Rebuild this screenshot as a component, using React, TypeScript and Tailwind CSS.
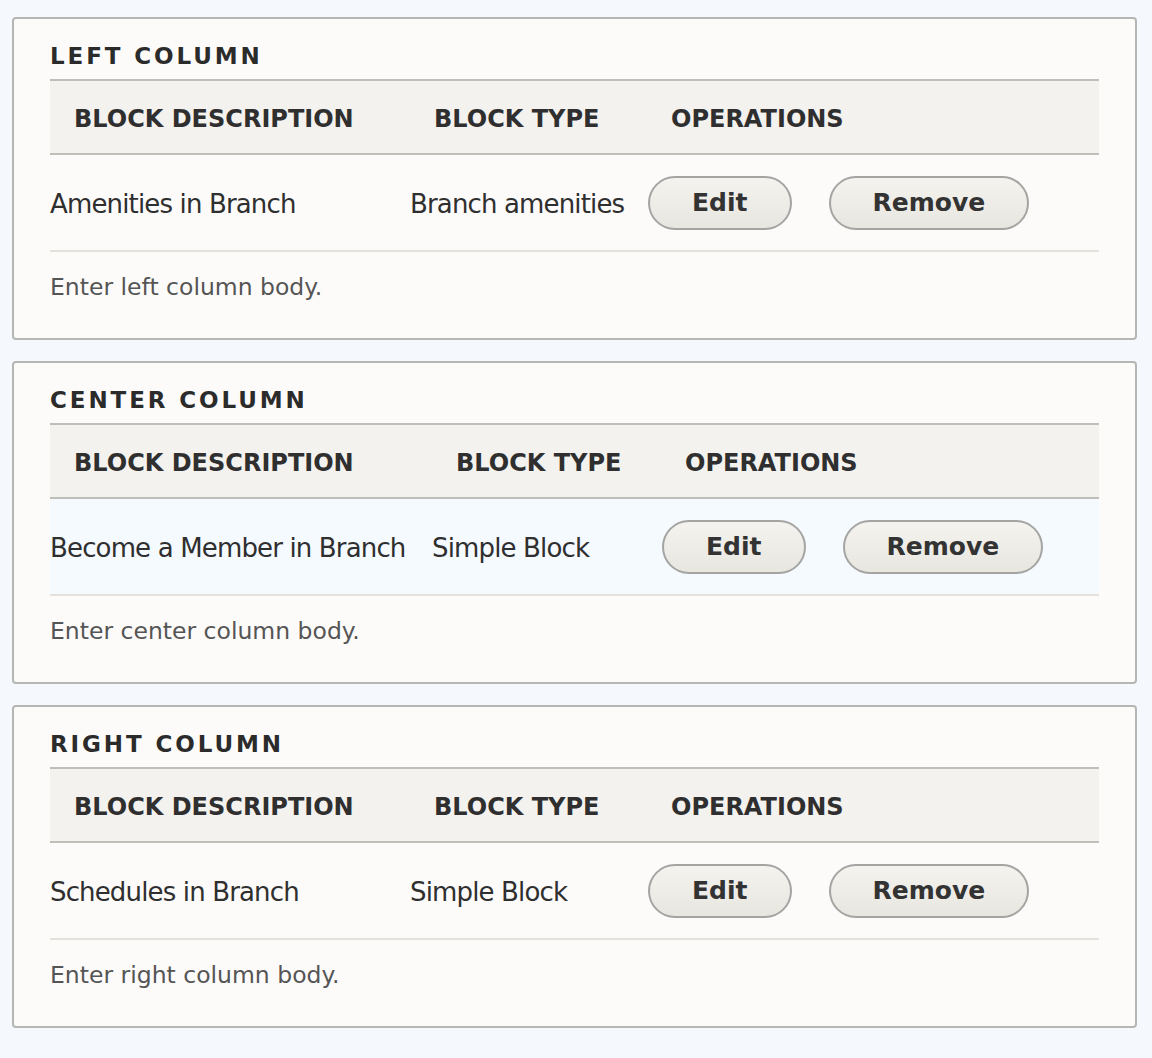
import React from "react";

type Region = {
  title: string;
  description: string;
  type: string;
  body: string;
  cols: string;
  highlight?: boolean;
};

const regions: Region[] = [
  {
    title: "Left column",
    description: "Amenities in Branch",
    type: "Branch amenities",
    body: "Enter left column body.",
    cols: "grid-cols-[360px_237px_1fr]",
  },
  {
    title: "Center column",
    description: "Become a Member in Branch",
    type: "Simple Block",
    body: "Enter center column body.",
    cols: "grid-cols-[382px_229px_1fr]",
    highlight: true,
  },
  {
    title: "Right column",
    description: "Schedules in Branch",
    type: "Simple Block",
    body: "Enter right column body.",
    cols: "grid-cols-[360px_237px_1fr]",
  },
];

const font = { fontFamily: '"DejaVu Sans", Verdana, sans-serif' };

function PillButton({ children }: { children: React.ReactNode }) {
  return (
    <button className="h-[54px] rounded-full border-2 border-[#a4a4a2] bg-gradient-to-b from-[#f4f3ef] to-[#e7e6df] px-[42px] text-[25px] font-bold text-[#333]">
      {children}
    </button>
  );
}

function RegionFieldset({ region }: { region: Region }) {
  return (
    <section className="rounded-[4px] border-2 border-[#b6b6b4] bg-[#fcfbfa] px-[36px] pt-[23px] pb-[37px]">
      <div className="mb-[9px] h-[28px] text-[23px] leading-[28px] font-bold uppercase tracking-[2.9px] text-[#2b2b2b]">
        {region.title}
      </div>
      <div className={`grid ${region.cols} h-[76px] border-y-2 border-[#bfbfba] bg-[#f3f2ee]`}>
        {["Block description", "Block type", "Operations"].map((h) => (
          <div
            key={h}
            className="flex items-center pt-[4px] pl-[24px] text-[24px] font-bold uppercase text-[#2f2f2f]"
          >
            {h}
          </div>
        ))}
      </div>
      <div
        className={`grid ${region.cols} h-[97px] border-b-2 border-[#e2e1dc] ${
          region.highlight ? "bg-[#f5faff]" : ""
        } text-[26px] tracking-[-0.85px] text-[#2f2f2f]`}
      >
        <div className="flex items-center whitespace-nowrap pt-[3px]">{region.description}</div>
        <div className="flex items-center whitespace-nowrap pt-[3px]">{region.type}</div>
        <div className="flex items-center gap-[37px] pl-[1px] tracking-normal">
          <PillButton>Edit</PillButton>
          <PillButton>Remove</PillButton>
        </div>
      </div>
      <div className="mt-[21px] h-[28px] text-[23.5px] leading-[28px] text-[#555]">{region.body}</div>
    </section>
  );
}

export default function App() {
  return (
    <div className="min-h-[1058px] bg-[#f5f9fe] pt-[17px] pl-[12px] pr-[15px]" style={font}>
      <div className="flex flex-col gap-[21px]">
        {regions.map((r) => (
          <RegionFieldset key={r.title} region={r} />
        ))}
      </div>
    </div>
  );
}
